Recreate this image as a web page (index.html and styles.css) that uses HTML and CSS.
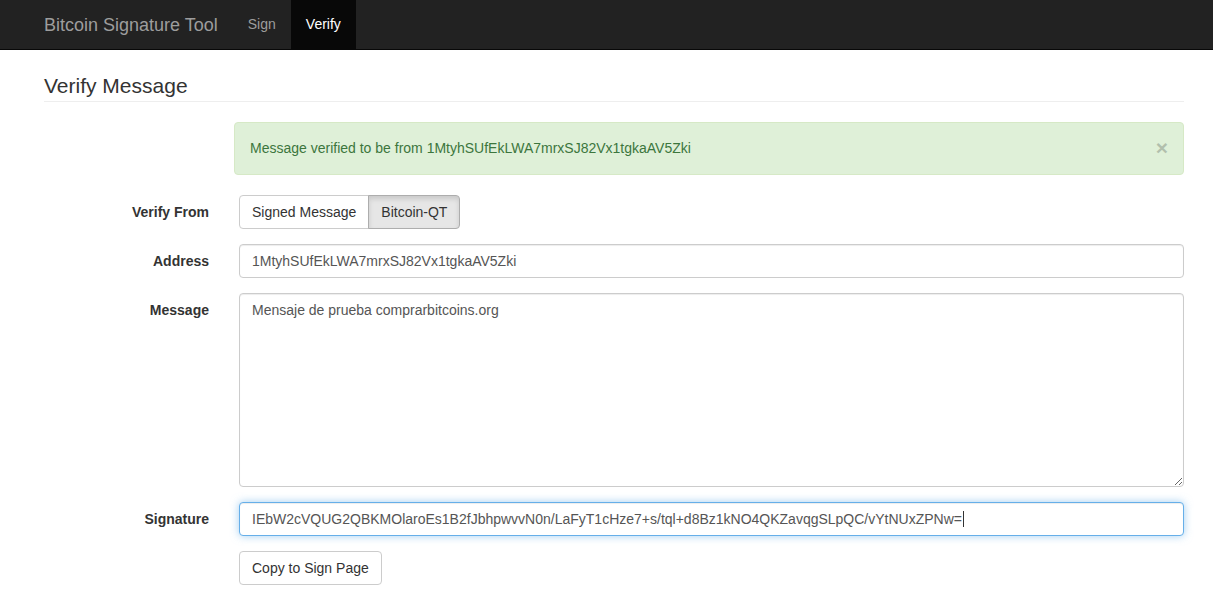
FILE: index.html
```html
<!DOCTYPE html>
<html lang="en">
<head>
<meta charset="UTF-8">
<meta name="viewport" content="width=device-width, initial-scale=1.0">
<title>Bitcoin Signature Tool</title>
<link rel="stylesheet" href="styles.css">
</head>
<body>

<nav class="navbar">
  <div class="container navbar-inner">
    <a class="brand" href="#">Bitcoin Signature Tool</a>
    <ul class="nav">
      <li><a href="#">Sign</a></li>
      <li class="active"><a href="#">Verify</a></li>
    </ul>
  </div>
</nav>

<div class="container">
  <h3 class="page-header">Verify Message</h3>

  <div class="alert-row">
    <div class="alert">
      <span>Message verified to be from 1MtyhSUfEkLWA7mrxSJ82Vx1tgkaAV5Zki</span>
      <button class="close" type="button">&times;</button>
    </div>
  </div>

  <form class="form">
    <div class="form-group">
      <label class="label">Verify From</label>
      <div class="field">
        <div class="btn-group">
          <button type="button" class="btn">Signed Message</button>
          <button type="button" class="btn active">Bitcoin-QT</button>
        </div>
      </div>
    </div>

    <div class="form-group">
      <label class="label">Address</label>
      <div class="field">
        <input class="control" type="text" value="1MtyhSUfEkLWA7mrxSJ82Vx1tgkaAV5Zki">
      </div>
    </div>

    <div class="form-group">
      <label class="label">Message</label>
      <div class="field">
        <textarea class="control message">Mensaje de prueba comprarbitcoins.org</textarea>
      </div>
    </div>

    <div class="form-group">
      <label class="label">Signature</label>
      <div class="field">
        <div class="control focused">IEbW2cVQUG2QBKMOlaroEs1B2fJbhpwvvN0n/LaFyT1cHze7+s/tql+d8Bz1kNO4QKZavqgSLpQC/vYtNUxZPNw=<span class="caret"></span></div>
      </div>
    </div>

    <div class="form-group">
      <div class="label"></div>
      <div class="field">
        <button type="button" class="btn single">Copy to Sign Page</button>
      </div>
    </div>
  </form>
</div>

</body>
</html>
```

FILE: styles.css
```css
* {
  box-sizing: border-box;
}
body {
  margin: 0;
  font-family: "Liberation Sans", Arial, sans-serif;
  font-size: 14px;
  line-height: 20px;
  color: #333;
  background: #fff;
}
.container {
  width: 1170px;
  margin-left: 29px;
  padding: 0 15px;
}
.navbar {
  background-color: #222;
  border-bottom: 1px solid #080808;
  height: 50px;
}
.navbar-inner {
  display: flex;
  height: 49px;
  padding-left: 0;
}
.brand {
  display: block;
  padding: 15px;
  font-size: 18px;
  line-height: 20px;
  color: #9d9d9d;
  text-decoration: none;
}
.nav {
  display: flex;
  list-style: none;
  margin: 0;
  padding: 0;
}
.nav a {
  display: block;
  padding: 15px;
  line-height: 19px;
  color: #9d9d9d;
  text-decoration: none;
}
.nav .active a {
  background-color: #080808;
  color: #fff;
}
.page-header {
  margin: 23px 0 20px;
  padding-bottom: 2px;
  font-size: 21px;
  font-weight: 400;
  line-height: 26px;
  border-bottom: 1px solid #eee;
}
.alert-row {
  padding-left: 190px;
}
.alert {
  display: flex;
  justify-content: space-between;
  align-items: center;
  padding: 15px 15px 16px 15px;
  margin-bottom: 20px;
  border: 1px solid #d6e9c6;
  border-radius: 4px;
  background-color: #dff0d8;
  color: #3c763d;
}
.close {
  padding: 0;
  border: 0;
  background: none;
  font-family: "Liberation Sans", Arial, sans-serif;
  font-size: 21px;
  font-weight: bold;
  line-height: 20px;
  color: #000;
  opacity: 0.2;
  cursor: pointer;
}
.form-group {
  display: flex;
  margin: 0 -15px 15px;
}
.label {
  width: 195px;
  padding: 7px 15px 0;
  text-align: right;
  font-weight: bold;
}
.field {
  flex: 1;
  padding: 0 15px;
  min-width: 0;
}
.btn-group {
  display: flex;
}
.btn {
  display: inline-block;
  padding: 6px 12px;
  font-family: inherit;
  font-size: 14px;
  line-height: 20px;
  color: #333;
  background-color: #fff;
  border: 1px solid #ccc;
  border-radius: 4px;
  cursor: pointer;
}
.btn-group .btn:first-child {
  border-top-right-radius: 0;
  border-bottom-right-radius: 0;
}
.btn-group .btn + .btn {
  margin-left: -1px;
  border-top-left-radius: 0;
  border-bottom-left-radius: 0;
}
.btn.active {
  background-color: #e6e6e6;
  border-color: #adadad;
  box-shadow: inset 0 3px 5px rgba(0, 0, 0, 0.125);
}
.control {
  display: block;
  width: 100%;
  height: 34px;
  padding: 6px 12px;
  font-family: inherit;
  font-size: 14px;
  line-height: 20px;
  color: #555;
  background-color: #fff;
  border: 1px solid #ccc;
  border-radius: 4px;
  box-shadow: inset 0 1px 1px rgba(0, 0, 0, 0.075);
  white-space: nowrap;
  overflow: hidden;
}
.message {
  height: 194px;
  resize: vertical;
  white-space: pre-wrap;
  overflow: auto;
}
.focused {
  border-color: #66afe9;
  box-shadow: inset 0 1px 1px rgba(0, 0, 0, 0.075), 0 0 8px rgba(102, 175, 233, 0.6);
}
.caret {
  display: inline-block;
  width: 1px;
  height: 16px;
  margin-left: 1px;
  vertical-align: -3px;
  background-color: #333;
}
```
